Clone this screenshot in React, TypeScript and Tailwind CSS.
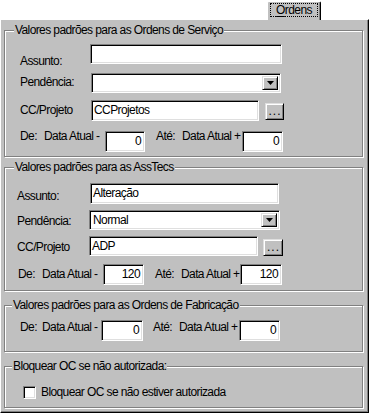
import React from 'react';

const font = "font-['Liberation_Sans',Arial,sans-serif]";

function Field({ w, h, text, right, className = '' }: { w: string; h: string; text?: string; right?: boolean; className?: string }) {
  return (
    <div
      className={`${w} ${h} ${className} shrink-0 bg-white border border-t-[#808080] border-l-[#808080] border-r-white border-b-white shadow-[inset_1px_1px_0_#000,inset_-1px_-1px_0_#dfdfdf] flex items-center ${right ? 'justify-end pr-[3px]' : 'pl-[2px]'}`}
    >
      {text && <span className="leading-[15px]">{text}</span>}
    </div>
  );
}

function Select({ w, h, text }: { w: string; h: string; text?: string }) {
  return (
    <div className={`${w} ${h} shrink-0 bg-white border border-t-[#808080] border-l-[#808080] border-r-white border-b-white shadow-[inset_1px_1px_0_#000,inset_-1px_-1px_0_#dfdfdf] flex p-[2px]`}>
      <div className="flex-1 flex items-center pl-px leading-[15px]">{text}</div>
      <div className="w-[16px] h-full bg-[#c0c0c0] border border-t-[#dfdfdf] border-l-[#dfdfdf] border-r-black border-b-black shadow-[inset_1px_1px_0_#fff,inset_-1px_-1px_0_#808080] flex items-center justify-center">
        <svg width="7" height="4" viewBox="0 0 7 4">
          <path d="M0 0h7L3.5 4z" fill="#000" />
        </svg>
      </div>
    </div>
  );
}

function DotsButton({ w, h, className = '' }: { w: string; h: string; className?: string }) {
  return (
    <div className={`${w} ${h} ${className} shrink-0 bg-[#c0c0c0] border border-t-[#dfdfdf] border-l-[#dfdfdf] border-r-black border-b-black shadow-[inset_1px_1px_0_#fff,inset_-1px_-1px_0_#808080] flex items-end justify-center pb-[2px]`}>
      <span className="leading-[11px] tracking-[1px] pl-px">...</span>
    </div>
  );
}

function Group({ title, titleLeft, h, mt, children }: { title: string; titleLeft: string; h: string; mt: string; children: React.ReactNode }) {
  return (
    <div className={`relative ${mt} ${h} ml-[3px] w-[359px] border border-[#808080] shadow-[inset_1px_1px_0_#fff,1px_1px_0_#fff]`}>
      <span className={`absolute ${titleLeft} -top-[8px] bg-[#c0c0c0] px-px leading-[15px] whitespace-nowrap`}>{title}</span>
      {children}
    </div>
  );
}

type RowCfg = { mt: string; pl: string; de: string; data1: string; in1: string; gap: string; ate: string; data2: string; in2: string; inH: string; inMt: string; val: string };

function DateRow({ cfg }: { cfg: RowCfg }) {
  return (
    <div className={`flex items-start ${cfg.mt} ${cfg.pl} leading-[15px] whitespace-nowrap`}>
      <span className={`${cfg.de} shrink-0`}>De:</span>
      <span className={`${cfg.data1} shrink-0`}>Data Atual -</span>
      <Field w={cfg.in1} h={cfg.inH} text={cfg.val} right className={cfg.inMt} />
      <span className={`${cfg.gap} ${cfg.ate} shrink-0`}>Até:</span>
      <span className={`${cfg.data2} shrink-0`}>Data Atual +</span>
      <Field w={cfg.in2} h={cfg.inH} text={cfg.val} right className={cfg.inMt} />
    </div>
  );
}

export default function App() {
  return (
    <div className={`w-[369px] h-[413px] bg-white overflow-hidden text-[12px] tracking-[-0.6px] text-black ${font}`}>
      {/* tab strip */}
      <div className="h-[19px] flex justify-end pr-[48px]">
        <div className="relative z-10 mt-px w-[54px] h-[19px] bg-[#c0c0c0] border-l border-t border-white border-r border-r-black rounded-t-[2px] shadow-[inset_-1px_0_0_#808080] pt-px pl-[2px]">
          <div className="w-[48px] h-[14px] border border-dotted border-black flex items-center justify-center leading-[13px]">
            <span><span className="underline underline-offset-[2px]">O</span>rdens</span>
          </div>
        </div>
      </div>

      {/* page */}
      <div className="h-[394px] bg-[#c0c0c0] border-l border-t border-white border-r border-b border-r-black border-b-black shadow-[inset_-1px_-1px_0_#808080]">
        <Group title="Valores padrões para as Ordens de Serviço" titleLeft="left-[9px]" h="h-[127px]" mt="mt-[10px]">
          <div className="pl-[15px] pt-[13px]">
            <div className="flex items-start h-[20px]">
              <span className="w-[70px] shrink-0 mt-[10px] leading-[15px]">Assunto:</span>
              <Field w="w-[192px]" h="h-[20px]" />
            </div>
            <div className="flex items-start h-[20px] mt-[9px]">
              <span className="w-[71px] shrink-0 mt-[2px] leading-[15px]">Pendência:</span>
              <Select w="w-[190px]" h="h-[20px]" />
            </div>
            <div className="flex items-start h-[21px] mt-[7px]">
              <span className="w-[71px] shrink-0 mt-[3px] leading-[15px]">CC/Projeto</span>
              <Field w="w-[168px]" h="h-[21px]" text="CCProjetos" />
              <DotsButton w="w-[19px]" h="h-[17px]" className="ml-[6px] mt-[3px]" />
            </div>
          </div>
          <DateRow
            cfg={{ mt: 'mt-[8px]', pl: 'pl-[15px]', de: 'w-[24px]', data1: 'w-[61px]', in1: 'w-[40px]', gap: 'ml-[11px]', ate: 'w-[26px]', data2: 'w-[60px]', in2: 'w-[41px]', inH: 'h-[21px]', inMt: 'mt-[2px]', val: '0' }}
          />
        </Group>

        <Group title="Valores padrões para as AssTecs" titleLeft="left-[9px]" h="h-[124px]" mt="mt-[10px]">
          <div className="pl-[12px] pt-[15px]">
            <div className="flex items-start h-[21px]">
              <span className="w-[73px] shrink-0 mt-[6px] leading-[15px]">Assunto:</span>
              <Field w="w-[189px]" h="h-[21px]" text="Alteração" />
            </div>
            <div className="flex items-start h-[20px] mt-[6px]">
              <span className="w-[72px] shrink-0 mt-[4px] leading-[15px]">Pendência:</span>
              <Select w="w-[191px]" h="h-[20px]" text="Normal" />
            </div>
            <div className="flex items-start h-[20px] mt-[6px]">
              <span className="w-[72px] shrink-0 mt-[4px] leading-[15px]">CC/Projeto</span>
              <Field w="w-[169px]" h="h-[20px]" text="ADP" />
              <DotsButton w="w-[20px]" h="h-[17px]" className="ml-[5px] mt-[3px]" />
            </div>
          </div>
          <DateRow
            cfg={{ mt: 'mt-[11px]', pl: 'pl-[13px]', de: 'w-[24px]', data1: 'w-[61px]', in1: 'w-[41px]', gap: 'ml-[11px]', ate: 'w-[26px]', data2: 'w-[59px]', in2: 'w-[42px]', inH: 'h-[21px]', inMt: '-mt-[3px]', val: '120' }}
          />
        </Group>

        <Group title="Valores padrões para as Ordens de Fabricação" titleLeft="left-[7px]" h="h-[47px]" mt="mt-[14px]">
          <DateRow
            cfg={{ mt: 'mt-[14px]', pl: 'pl-[15px]', de: 'w-[22px]', data1: 'w-[59px]', in1: 'w-[42px]', gap: 'ml-[10px]', ate: 'w-[26px]', data2: 'w-[60px]', in2: 'w-[41px]', inH: 'h-[21px]', inMt: 'mt-0', val: '0' }}
          />
        </Group>

        <Group title="Bloquear OC se não autorizada:" titleLeft="left-[7px]" h="h-[42px]" mt="mt-[14px]">
          <div className="flex items-start mt-[18px] pl-[18px]">
            <div className="w-[13px] h-[13px] mt-px shrink-0 bg-white border border-t-[#808080] border-l-[#808080] border-r-white border-b-white shadow-[inset_1px_1px_0_#000,inset_-1px_-1px_0_#dfdfdf]" />
            <span className="ml-[5px] leading-[15px] whitespace-nowrap">Bloquear OC se não estiver autorizada</span>
          </div>
        </Group>
      </div>
    </div>
  );
}
